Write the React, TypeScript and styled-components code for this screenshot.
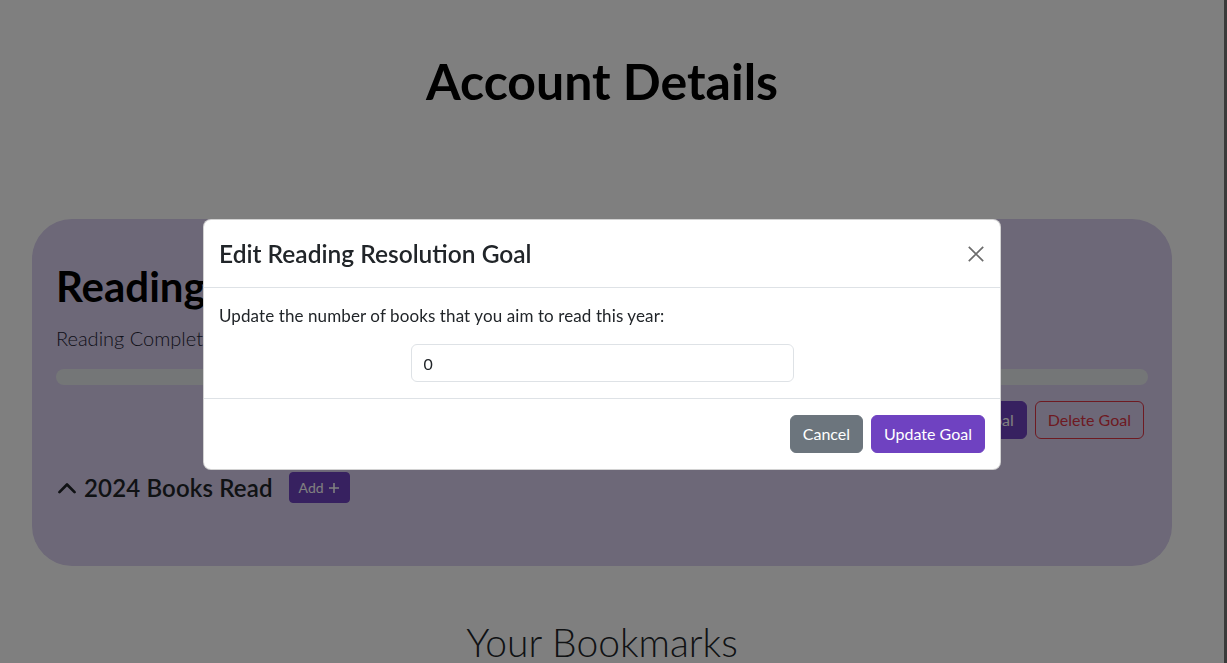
import React from "react";
import styled, { createGlobalStyle } from "styled-components";

const Global = createGlobalStyle`
  html, body { margin: 0; padding: 0; background: #ffffff; }
  body {
    font-family: Lato, "Noto Sans", "Liberation Sans", sans-serif;
    color: #212529;
    overflow: hidden;
  }
  * { box-sizing: border-box; }
`;

const Page = styled.div`
  width: 1227px;
  height: 663px;
  padding-right: 20px;
  border-right: 3px solid #747474;
  overflow: hidden;
`;

const PageTitle = styled.h1`
  margin: 0;
  padding-top: 51px;
  height: 219px;
  text-align: center;
  font-size: 50px;
  font-weight: 700;
  line-height: 60px;
  color: #000;
`;

const Card = styled.section`
  margin: 0 32px;
  height: 347px;
  background: #dad0f0;
  border-radius: 40px;
  padding: 41px 24px 24px;
`;

const CardHeading = styled.h2`
  margin: 0 0 11px;
  font-size: 42px;
  font-weight: 700;
  line-height: 52px;
  color: #000;
`;

const Lead = styled.p`
  margin: 0 0 16px;
  font-size: 20px;
  font-weight: 300;
  line-height: 30px;
  color: #1d2233;
`;

const Progress = styled.div`
  height: 16px;
  border-radius: 8px;
  background: #e9ecef;
`;

const ActionRow = styled.div`
  display: flex;
  justify-content: flex-end;
  gap: 8px;
  margin-top: 16px;
  padding-right: 4px;
`;

const Button = styled.button<{ $variant: "purple" | "gray" | "danger"; $small?: boolean }>`
  font-family: inherit;
  font-size: ${(p) => (p.$small ? "14px" : "16px")};
  line-height: ${(p) => (p.$small ? "21px" : "24px")};
  padding: ${(p) => (p.$small ? "4px 9px" : "6px 12px")};
  border-radius: ${(p) => (p.$small ? "4px" : "6px")};
  border: 1px solid
    ${(p) => (p.$variant === "purple" ? "#6f42c1" : p.$variant === "gray" ? "#6c757d" : "#dc3545")};
  background: ${(p) => (p.$variant === "purple" ? "#6f42c1" : p.$variant === "gray" ? "#6c757d" : "transparent")};
  color: ${(p) => (p.$variant === "danger" ? "#dc3545" : "#ffffff")};
  display: inline-flex;
  align-items: center;
  gap: 4px;
  cursor: pointer;
`;

const BooksRow = styled.div`
  display: flex;
  align-items: center;
  gap: 16px;
  margin-top: 33px;
`;

const BooksTitle = styled.h4`
  margin: 0;
  display: flex;
  align-items: center;
  gap: 6px;
  font-size: 24px;
  font-weight: 600;
  line-height: 30px;
  letter-spacing: 0.15px;
  color: #212529;
`;

const Bookmarks = styled.h2`
  margin: 52px 0 0;
  text-align: center;
  font-size: 39px;
  font-weight: 300;
  line-height: 48px;
  color: #212529;
`;

const Backdrop = styled.div`
  position: fixed;
  inset: 0;
  background: rgba(0, 0, 0, 0.5);
`;

const ModalLayer = styled.div`
  position: fixed;
  top: 0;
  left: 0;
  width: 1204px;
  padding-top: 219px;
  display: flex;
  justify-content: center;
`;

const Dialog = styled.div`
  width: 798px;
  background: #fff;
  border: 1px solid rgba(0, 0, 0, 0.175);
  border-radius: 8px;
  overflow: hidden;
`;

const ModalHeader = styled.div`
  display: flex;
  align-items: center;
  justify-content: space-between;
  padding: 16px 15px 15px 15px;
  border-bottom: 1px solid #dee2e6;
`;

const ModalTitle = styled.div`
  font-size: 24.5px;
  font-weight: 600;
  line-height: 36px;
  color: #212529;
`;

const Close = styled.button`
  width: 16px;
  height: 16px;
  border: none;
  background: transparent;
  padding: 0;
  margin-right: 1px;
  display: flex;
  align-items: center;
  justify-content: center;
  cursor: pointer;
`;

const ModalBody = styled.div`
  padding: 16px 15px;
  border-bottom: 1px solid #dee2e6;
`;

const BodyText = styled.p`
  margin: 0 0 16px;
  font-size: 17px;
  line-height: 24px;
  letter-spacing: 0.1px;
  color: #212529;
`;

const Input = styled.input`
  display: block;
  width: 50%;
  margin: 0 auto;
  height: 38px;
  padding: 6px 12px;
  font-family: inherit;
  font-size: 16px;
  color: #212529;
  border: 1px solid #dee2e6;
  border-radius: 6px;
  outline: none;
`;

const ModalFooter = styled.div`
  display: flex;
  justify-content: flex-end;
  gap: 8px;
  padding: 16px 15px;
`;

const ChevronUp = () => (
  <svg width="22" height="22" viewBox="0 0 16 16" fill="none">
    <path d="M2.5 11 L8 5.5 L13.5 11" stroke="#212529" strokeWidth="2" strokeLinecap="round" strokeLinejoin="round" />
  </svg>
);

const Plus = () => (
  <svg width="12" height="12" viewBox="0 0 12 12">
    <path d="M6 1v10M1 6h10" stroke="#fff" strokeWidth="1.6" />
  </svg>
);

const XIcon = () => (
  <svg width="16" height="16" viewBox="0 0 16 16">
    <path d="M0.8 0.8 L15.2 15.2 M15.2 0.8 L0.8 15.2" stroke="#6c6c6c" strokeWidth="1.7" />
  </svg>
);

export default function App() {
  return (
    <>
      <Global />
      <Page>
        <PageTitle>Account Details</PageTitle>
        <Card>
          <CardHeading>Reading Resolution</CardHeading>
          <Lead>Reading Completed: 0 / 0 books</Lead>
          <Progress />
          <ActionRow>
            <Button $variant="purple">Edit Goal</Button>
            <Button $variant="danger">Delete Goal</Button>
          </ActionRow>
          <BooksRow>
            <BooksTitle>
              <ChevronUp />
              2024 Books Read
            </BooksTitle>
            <Button $variant="purple" $small>
              Add <Plus />
            </Button>
          </BooksRow>
        </Card>
        <Bookmarks>Your Bookmarks</Bookmarks>
      </Page>
      <Backdrop />
      <ModalLayer>
        <Dialog>
          <ModalHeader>
            <ModalTitle>Edit Reading Resolution Goal</ModalTitle>
            <Close aria-label="Close">
              <XIcon />
            </Close>
          </ModalHeader>
          <ModalBody>
            <BodyText>Update the number of books that you aim to read this year:</BodyText>
            <Input type="number" defaultValue={0} />
          </ModalBody>
          <ModalFooter>
            <Button $variant="gray">Cancel</Button>
            <Button $variant="purple">Update Goal</Button>
          </ModalFooter>
        </Dialog>
      </ModalLayer>
    </>
  );
}
